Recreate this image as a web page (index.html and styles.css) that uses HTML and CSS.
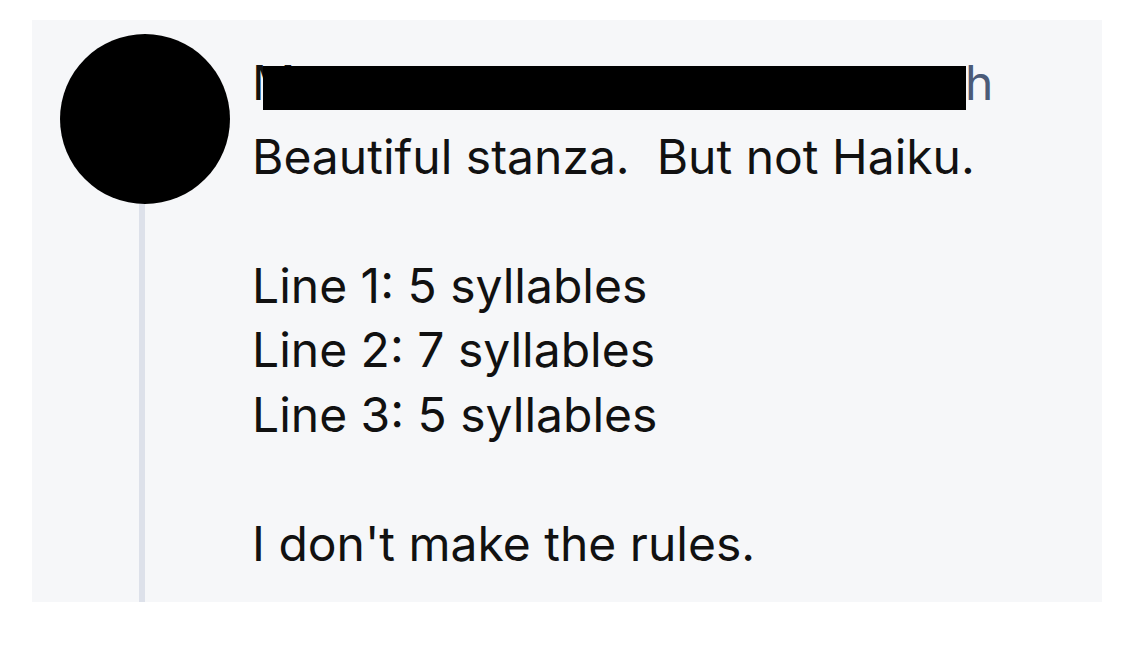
FILE: index.html
```html
<!DOCTYPE html>
<html lang="en">
<head>
<meta charset="utf-8">
<title>Comment</title>
<link rel="stylesheet" href="styles.css">
</head>
<body>
<div class="card">
  <div class="rail">
    <div class="avatar"></div>
    <div class="thread"></div>
  </div>
  <div class="content">
    <div class="header">
      <span class="name">M</span><span class="time">h</span>
      <span class="redact"></span>
    </div>
    <div class="body">Beautiful stanza.  But not Haiku.

Line 1: 5 syllables
Line 2: 7 syllables
Line 3: 5 syllables

I don't make the rules.</div>
  </div>
</div>
</body>
</html>
```
FILE: styles.css
```css
html, body {
  margin: 0;
  padding: 0;
  background: #ffffff;
}
body {
  padding: 20px 28px 0 32px;
  font-family: Inter, "Noto Sans", sans-serif;
  color: #111111;
}
.card {
  background: #f6f7f9;
  height: 582px;
  overflow: hidden;
  display: flex;
  gap: 22px;
  padding: 14px 0 0 28px;
  box-sizing: border-box;
}
.rail {
  width: 170px;
  display: flex;
  flex-direction: column;
  align-items: center;
  flex-shrink: 0;
}
.avatar {
  width: 170px;
  height: 170px;
  border-radius: 50%;
  background: #000;
  flex-shrink: 0;
}
.thread {
  width: 6px;
  flex: 1;
  background: #dde1ea;
  margin-right: 6px;
}
.content {
  flex: 1;
  padding-top: 16.5px;
}
.header {
  position: relative;
  font-size: 48px;
  line-height: 64px;
  height: 74px;
  display: flex;
  align-items: flex-start;
}
.name {
  display: inline-block;
  width: 713px;
  color: #111;
}
.time {
  color: #4b5b78;
}
.redact {
  position: absolute;
  left: 11px;
  top: 15.5px;
  width: 703px;
  height: 44px;
  background: #000;
}
.body {
  white-space: pre-wrap;
  font-size: 48px;
  line-height: 64.5px;
}
```
